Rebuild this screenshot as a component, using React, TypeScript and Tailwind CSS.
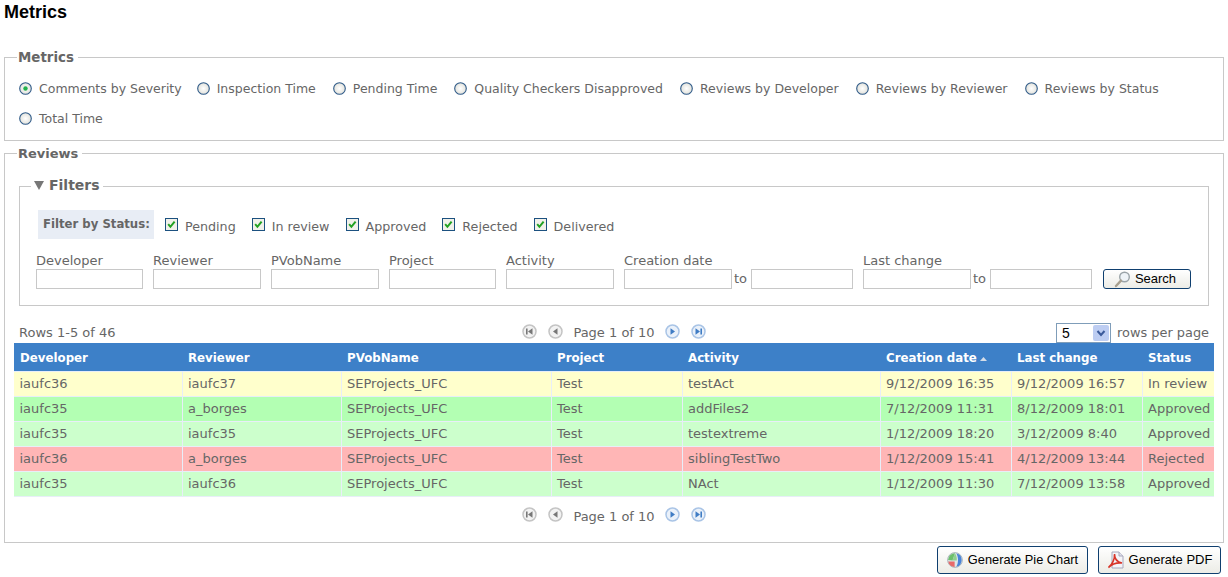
import React from "react";

const metrics = ["Comments by Severity","Inspection Time","Pending Time","Quality Checkers Disapproved","Reviews by Developer","Reviews by Reviewer","Reviews by Status","Total Time"];
const statuses = ["Pending","In review","Approved","Rejected","Delivered"];
const headers = ["Developer","Reviewer","PVobName","Project","Activity","Creation date","Last change","Status"];
const rows = [
  { c: "bg-[#ffffcc]", d: ["iaufc36","iaufc37","SEProjects_UFC","Test","testAct","9/12/2009 16:35","9/12/2009 16:57","In review"] },
  { c: "bg-[#b3ffb3]", d: ["iaufc35","a_borges","SEProjects_UFC","Test","addFiles2","7/12/2009 11:31","8/12/2009 18:01","Approved"] },
  { c: "bg-[#ccffcc]", d: ["iaufc35","iaufc35","SEProjects_UFC","Test","testextreme","1/12/2009 18:20","3/12/2009 8:40","Approved"] },
  { c: "bg-[#ffb6b6]", d: ["iaufc36","a_borges","SEProjects_UFC","Test","siblingTestTwo","1/12/2009 15:41","4/12/2009 13:44","Rejected"] },
  { c: "bg-[#ccffcc]", d: ["iaufc35","iaufc36","SEProjects_UFC","Test","NAct","1/12/2009 11:30","7/12/2009 13:58","Approved"] },
];

function Radio({ on }: { on?: boolean }) {
  return (
    <svg width="13" height="13" viewBox="0 0 13 13" className="shrink-0">
      <defs>
        <radialGradient id="rg" cx="0.5" cy="0.5" r="0.6">
          <stop offset="0" stopColor="#ffffff" />
          <stop offset="1" stopColor="#dcdcd4" />
        </radialGradient>
      </defs>
      <circle cx="6.5" cy="6.5" r="5.8" fill="url(#rg)" stroke="#2f5a88" strokeWidth="1.1" />
      {on && <circle cx="6.5" cy="6.5" r="2.2" fill="#22b14c" />}
    </svg>
  );
}

function Check() {
  return (
    <svg width="13" height="13" viewBox="0 0 13 13" className="shrink-0">
      <rect x="0.5" y="0.5" width="12" height="12" fill="#f1f1ea" stroke="#1c5180" />
      <path d="M3.2 6.2 L5.4 8.8 L9.6 3.6" fill="none" stroke="#21a121" strokeWidth="2" />
    </svg>
  );
}

function PagerBtn({ dir, active }: { dir: "first" | "prev" | "next" | "last"; active?: boolean }) {
  const fg = active ? "#3f7cc4" : "#777";
  const ring = active ? "#a9c4e6" : "#c4c4c4";
  const fill = active ? "#eaf1fa" : "#f2f2f2";
  return (
    <svg width="15" height="15" viewBox="0 0 15 15" className="mb-[3px] shrink-0">
      <circle cx="7.5" cy="7.5" r="6.5" fill={fill} stroke={ring} strokeWidth="1.5" />
      {dir === "first" && <><rect x="4" y="4.5" width="1.6" height="6" fill={fg} /><path d="M10.5 4.2 V10.8 L6 7.5 Z" fill={fg} /></>}
      {dir === "prev" && <path d="M9.5 4.2 V10.8 L5 7.5 Z" fill={fg} />}
      {dir === "next" && <path d="M5.5 4.2 V10.8 L10 7.5 Z" fill={fg} />}
      {dir === "last" && <><rect x="9.4" y="4.5" width="1.6" height="6" fill={fg} /><path d="M4.5 4.2 V10.8 L9 7.5 Z" fill={fg} /></>}
    </svg>
  );
}

function Pager() {
  return (
    <div className="flex items-center">
      <PagerBtn dir="first" />
      <span className="w-[11px]" />
      <PagerBtn dir="prev" />
      <span className="mx-[10px]">Page 1 of 10</span>
      <PagerBtn dir="next" active />
      <span className="w-[11px]" />
      <PagerBtn dir="last" active />
    </div>
  );
}

function Field({ label, w, className = "" }: { label: string; w: string; className?: string }) {
  return (
    <div className={"flex flex-col " + className}>
      <span className="h-[16px] leading-[16px]">{label}</span>
      <input className={"h-[20px] border border-[#c8c8c8] bg-white " + w} />
    </div>
  );
}

function Btn({ children, icon, className = "" }: { children: React.ReactNode; icon: React.ReactNode; className?: string }) {
  return (
    <button className={"flex items-center justify-center rounded-[3px] border border-[#0f3f6f] bg-gradient-to-b from-white to-[#ecece6] text-black font-['Liberation_Sans',sans-serif] " + className}>
      {icon}
      {children}
    </button>
  );
}

export default function App() {
  const widths = ["w-[168px]","w-[159px]","w-[210px]","w-[131px]","w-[198px]","w-[131px]","w-[131px]","w-[72px]"];
  return (
    <div className="w-[1228px] h-[577px] overflow-hidden bg-white px-1 font-['DejaVu_Sans',sans-serif] text-[13px] text-[#666]">
      <h1 className="h-[24px] pt-px text-[18px] leading-[22px] font-bold text-black font-['Liberation_Sans',sans-serif]">Metrics</h1>

      <fieldset className="mt-[24px] h-[93px] border border-[#c8c8c8] pl-[14px]">
        <legend className="ml-[-2px] px-px pt-[2px] pr-[4px] font-bold text-[13.4px] leading-[16px]">Metrics</legend>
        <div className="mt-[8px] flex flex-wrap gap-x-[17px] text-[12.5px]">
          {metrics.map((m, i) => (
            <label key={m} className="flex h-[30px] items-center gap-[7px] first:mr-[-2px]">
              <span className="-mt-[2px]"><Radio on={i === 0} /></span>
              {m}
            </label>
          ))}
        </div>
      </fieldset>

      <fieldset className="mt-[3px] h-[399px] border border-[#c8c8c8] pl-[9px] pr-[9px]">
        <legend className="ml-[3px] px-px pt-[2px] pr-[4px] font-bold text-[13px] leading-[16px]">Reviews</legend>

        <fieldset className="mt-[14px] mx-[5px] h-[130px] border border-[#c8c8c8] pl-[16px]">
          <legend className="ml-[-5px] flex items-center gap-[5px] px-[3px] pb-[2px] font-bold text-[14px] leading-[18px]">
            <svg width="10" height="9" viewBox="0 0 10 9"><path d="M0 0 H10 L5 9 Z" fill="#777" /></svg>
            Filters
          </legend>
          <div className="ml-[2px] mt-[14px] flex items-center">
            <span className="flex h-[29px] w-[116px] items-center bg-[#e8edf5] pl-[5px] text-[11.7px] font-bold leading-none whitespace-nowrap">Filter by Status:</span>
            <div className="ml-[11px] flex gap-[16px] text-[12.7px]">
              {statuses.map((s) => (
                <label key={s} className="flex items-center gap-[7px]">
                  <Check />
                  <span className="mt-[4px]">{s}</span>
                </label>
              ))}
            </div>
          </div>
          <div className="mt-[14px] flex items-end">
            <Field label="Developer" w="w-[107px]" />
            <Field label="Reviewer" w="w-[108px]" className="ml-[10px]" />
            <Field label="PVobName" w="w-[108px]" className="ml-[10px]" />
            <Field label="Project" w="w-[107px]" className="ml-[10px]" />
            <Field label="Activity" w="w-[108px]" className="ml-[10px]" />
            <Field label="Creation date" w="w-[108px]" className="ml-[10px]" />
            <span className="w-[19px] pl-[2px] leading-[20px]">to</span>
            <input className="h-[20px] w-[102px] border border-[#c8c8c8]" />
            <Field label="Last change" w="w-[108px]" className="ml-[10px]" />
            <span className="w-[19px] pl-[2px] leading-[20px]">to</span>
            <input className="h-[20px] w-[102px] border border-[#c8c8c8]" />
            <Btn
              className="ml-[11px] h-[20px] w-[88px] gap-[4px] pr-[4px] text-[13px]"
              icon={
                <svg width="17" height="17" viewBox="0 0 17 17">
                  <circle cx="10.5" cy="6" r="4.8" fill="#eef3f7" stroke="#9aa3a8" strokeWidth="1.4" />
                  <path d="M7 9.6 L2 15" stroke="#a8a090" strokeWidth="2.4" strokeLinecap="round" />
                </svg>
              }
            >
              Search
            </Btn>
          </div>
        </fieldset>

        <div className="mt-[17px] flex h-[20px] items-center justify-between px-[5px]">
          <span className="w-[200px]">Rows 1-5 of 46</span>
          <div><Pager /></div>
          <div className="flex w-[200px] items-center justify-end">
            <span className="flex h-[20px] w-[55px] items-center justify-between border border-[#7f9db9] pl-[5px] pr-px text-[14px] text-black font-['Liberation_Sans',sans-serif]">
              5
              <svg width="16" height="16" viewBox="0 0 16 16">
                <rect width="16" height="16" rx="2" fill="#bdcdf2" />
                <path d="M4.5 6 L8 10 L11.5 6" fill="none" stroke="#3b5a9a" strokeWidth="2" />
              </svg>
            </span>
            <span className="ml-[6px] text-[12.9px]">rows per page</span>
          </div>
        </div>

        <table className="w-[1200px] table-fixed border-collapse">
          <thead>
            <tr className="h-[28px] bg-[#3d80c8] text-left text-[11.8px] text-white">
              {headers.map((h, i) => (
                <th key={h} className={"px-[6px] pt-[4px] font-bold " + widths[i]}>
                  <span className="flex items-center gap-[3px]">
                    {h}
                    {h === "Creation date" && (
                      <svg width="7" height="4" viewBox="0 0 7 4"><path d="M0 4 L3.5 0 L7 4 Z" fill="#d5dde8" /></svg>
                    )}
                  </span>
                </th>
              ))}
            </tr>
          </thead>
          <tbody>
            {rows.map((r, i) => (
              <tr key={i} className={"h-[25px] " + r.c}>
                {r.d.map((c, j) => (
                  <td key={j} className="border border-[#e8eef8] px-[5.5px] first:border-l-0 last:border-r-0 whitespace-nowrap">{c}</td>
                ))}
              </tr>
            ))}
          </tbody>
        </table>

        <div className="mt-[10px] flex justify-center"><Pager /></div>
      </fieldset>

      <div className="mt-[3px] flex justify-end gap-[10px] pr-[3px]">
        <Btn
          className="h-[28px] w-[151px] gap-[5px] text-[12.8px]"
          icon={
            <svg width="16" height="16" viewBox="0 0 16 16">
              <circle cx="8" cy="8" r="7.4" fill="#dfe6ea" stroke="#9aa8b0" strokeWidth="0.8" />
              <path d="M9.3 1.2 A7 7 0 0 1 9.3 14.8 C11.6 11 11.6 5 9.3 1.2 Z" fill="#4a84d8" />
              <path d="M8 1.2 A7 7 0 0 0 1.1 8 L5.5 8.4 Z" fill="#6cbf6c" />
              <path d="M8 1.2 C9.8 4 10 6.4 9.7 8.4 L5.5 8.4 Z" fill="#8fd08f" />
              <path d="M1.2 9.4 L7.6 9.4 L7.6 14.9 A7 7 0 0 1 1.2 9.4 Z" fill="#e86a6a" />
            </svg>
          }
        >
          Generate Pie Chart
        </Btn>
        <Btn
          className="h-[28px] w-[123px] gap-[4px] text-[13px]"
          icon={
            <svg width="18" height="19" viewBox="0 0 18 19">
              <path d="M5 1 H12 L16 5 V17 H5 Z" fill="#f4f4f8" stroke="#a8a8bc" />
              <path d="M12 1 V5 H16" fill="#e0e0ea" stroke="#a8a8bc" />
              <path d="M1.5 16.5 C5 14 8 8 7.5 3 C7.5 8 10 11 15 12 C10 11.5 5 13 1.5 16.5 Z" fill="none" stroke="#d8352a" strokeWidth="1.6" />
            </svg>
          }
        >
          Generate PDF
        </Btn>
      </div>
    </div>
  );
}
